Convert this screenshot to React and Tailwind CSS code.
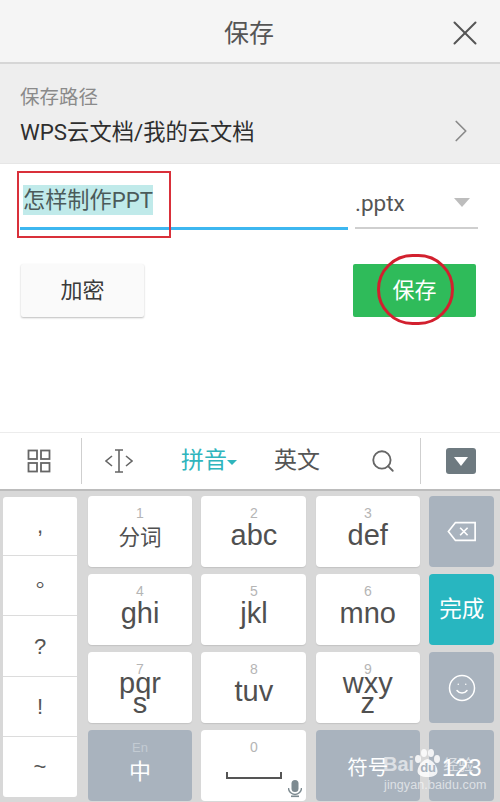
import { Search, Smile, X, ChevronRight } from 'lucide-react'

const cjk = "font-['Roboto','Noto_Sans_CJK_SC',sans-serif]"

function Key({ num, label, extra }) {
  return (
    <div className="h-[71px] bg-white rounded-[4px] shadow-[0_1px_1px_#c4c4c4] flex flex-col items-center pt-[10px]">
      <span className="text-[14px] leading-[14px] text-[#b5b5b5]">{num}</span>
      <span className={`text-[#505050] leading-[30px] ${extra ? 'text-[29px] -mt-[8px]' : 'text-[29px] mt-[0px]'}`}>{label}</span>
      {extra && <span className="text-[29px] leading-[20px] -mt-[5px] text-[#505050]">{extra}</span>}
    </div>
  )
}

function GrayKey({ className, children }) {
  return (
    <div className={`h-[71px] bg-[#a9b3be] rounded-[4px] flex flex-col items-center justify-center text-white ${className || ''}`}>
      {children}
    </div>
  )
}

export default function App() {
  return (
    <div className={`w-[500px] h-[802px] overflow-hidden relative bg-white ${cjk}`}>
      {/* header */}
      <div className="h-[64px] bg-[#f5f5f5] border-b-2 border-[#d6d6d6] flex items-center justify-center relative">
        <span className="text-[25px] text-[#555] mt-[6px] -ml-[2px]">保存</span>
        <X size={42} strokeWidth={1.15} className="absolute right-[14px] top-[12px] text-[#555]" />
      </div>

      {/* save path */}
      <div className="h-[100px] bg-[#eeeeee] pl-[20px] pr-[30px] pt-[19px] flex items-center justify-between border-b border-[#e6e6e6]">
        <div className="-mt-[13px]">
          <div className="text-[19.5px] leading-[26px] text-[#8a8a8a]">保存路径</div>
          <div className="text-[22.3px] leading-[34px] text-[#2e2e2e] mt-[4px]">WPS云文档/我的云文档</div>
        </div>
        <ChevronRight size={38} strokeWidth={1.1} className="text-[#8a8a8a] mt-[16px] mr-[-10px]" />
      </div>

      {/* file name */}
      <div className="flex pl-[20px] pr-[22px] pt-[21px]">
        <div className="w-[328px] h-[45px] border-b-[3px] border-[#3db7f0] pl-[3px]">
          <span className="inline-block h-[30px] bg-[#c0eaea] text-[22.2px] leading-[30px] text-[#4b5a5a]">怎样制作PPT</span>
        </div>
        <div className="ml-[7px] flex-1 h-[44px] border-b-2 border-[#cfcfcf] flex justify-between items-start pt-[3px] pr-[8px]">
          <span className="text-[22.5px] leading-[30px] text-[#555]">.pptx</span>
          <span className="w-0 h-0 mt-[10px] border-x-[8px] border-x-transparent border-t-[9px] border-t-[#bdbdbd]" />
        </div>
      </div>

      {/* buttons */}
      <div className="flex justify-between pl-[21px] pr-[24px] mt-[34px]">
        <div className="w-[123px] h-[53px] bg-[#fafafa] rounded-[2px] shadow-[0_1px_2px_#bdbdbd] flex items-center justify-center text-[22px] text-[#3a3a3a]">加密</div>
        <div className="w-[123px] h-[53px] bg-[#2fbb5a] rounded-[2px] flex items-center justify-center text-[22px] text-white">保存</div>
      </div>

      {/* keyboard */}
      <div className="absolute left-0 right-0 bottom-0">
        <div className="h-[59px] border-t border-[#ececec] border-b-2 border-b-[#bcbcbc] bg-white flex items-center">
          <div className="w-[82px] h-[46px] border-r border-[#cfcfcf] flex items-center justify-center">
            <svg width="24" height="24" viewBox="0 0 24 24" fill="none" stroke="#666" strokeWidth="1.8" className="-ml-[3px]">
              <rect x="1.5" y="1.5" width="8.5" height="8.5" />
              <rect x="14" y="1.5" width="8.5" height="8.5" />
              <rect x="1.5" y="14" width="8.5" height="8.5" />
              <rect x="14" y="14" width="8.5" height="8.5" />
            </svg>
          </div>
          <div className="w-[339px] h-[46px] border-r border-[#cfcfcf] flex items-center relative">
            <svg width="28" height="26" viewBox="0 0 28 26" fill="none" stroke="#666" strokeWidth="1.6" className="ml-[23px]">
              <path d="M7 8l-6 5 6 5M21 8l6 5-6 5M10 2h8M10 24h8M14 2v22" />
            </svg>
            <span className="ml-[48px] text-[23px] text-[#2fb5bd]">拼音</span>
            <span className="w-0 h-0 mt-[3px] border-x-[5px] border-x-transparent border-t-[5px] border-t-[#2fb5bd]" />
            <span className="ml-[37px] text-[23px] text-[#555]">英文</span>
            <Search size={26} strokeWidth={1.7} className="ml-[50px] text-[#666]" />
          </div>
          <div className="w-[30px] h-[26px] ml-[25px] bg-[#6e7a80] rounded-[3px] flex items-center justify-center">
            <span className="w-0 h-0 mt-[1px] border-x-[7px] border-x-transparent border-t-[9px] border-t-white" />
          </div>
        </div>

        <div className="h-[311px] bg-[#d8d8d8] flex pl-[3px] pt-[5px]">
          <div className="w-[74px] h-[300px] mt-[1px] bg-white rounded-[3px] flex flex-col divide-y divide-[#dcdcdc] text-[#555] text-[22px] font-['Liberation_Sans','Noto_Sans_CJK_TC',sans-serif]">
            {[',', '。', '?', '!', '~'].map((c, i) => (
              <div key={i} className="flex-1 flex items-center justify-center -translate-y-[1px]">{c}</div>
            ))}
          </div>
          <div className="ml-[11px] grid grid-cols-[104px_105px_104px_65px] gap-x-[9.4px] gap-y-[6.5px] font-['Liberation_Sans','Noto_Sans_CJK_SC',sans-serif]">
            <Key num="1" label={<span className="text-[21.5px]">分词</span>} />
            <Key num="2" label="abc" />
            <Key num="3" label="def" />
            <GrayKey>
              <svg width="30" height="21" viewBox="0 0 32 22" fill="none" stroke="#fff" strokeWidth="1.8">
                <path d="M9 1.5h21v19H9L1.5 11zM14 7l8 8M22 7l-8 8" />
              </svg>
            </GrayKey>

            <Key num="4" label="ghi" />
            <Key num="5" label="jkl" />
            <Key num="6" label="mno" />
            <GrayKey className="!bg-[#28b6c0] text-[22.5px] font-['Roboto','Noto_Sans_CJK_SC']">完成</GrayKey>

            <Key num="7" label="pqr" extra="s" />
            <Key num="8" label="tuv" />
            <Key num="9" label="wxy" extra="z" />
            <GrayKey><Smile size={30} strokeWidth={1.2} /></GrayKey>

            <GrayKey>
              <span className="text-[13px] leading-[14px] text-[#c3cbd3] -mt-[4px]">En</span>
              <span className="text-[22px] leading-[30px] mt-[2px]">中</span>
            </GrayKey>
            <div className="h-[71px] bg-white rounded-[4px] flex flex-col items-center pt-[10px] relative">
              <span className="text-[14px] leading-[14px] text-[#b5b5b5]">0</span>
              <svg width="56" height="8" viewBox="0 0 56 8" fill="none" stroke="#555" strokeWidth="2" className="mt-[18px]">
                <path d="M1 0v6h54V0" />
              </svg>
              <svg width="14" height="18" viewBox="0 0 14 18" className="absolute right-[4px] bottom-[3px]" fill="#7d8a90">
                <rect x="3.5" y="0" width="7" height="12" rx="3.5" />
                <path d="M0.5 8a6.5 6.5 0 0 0 13 0" fill="none" stroke="#7d8a90" strokeWidth="1.4" />
                <rect x="3" y="15.5" width="8" height="1.6" />
              </svg>
            </div>
            <GrayKey className="text-[20.5px] font-['Roboto','Noto_Sans_CJK_SC']"><span className="mt-[4px]">符号</span></GrayKey>
            <GrayKey className="text-[24px]"><span className="mt-[4px]">123</span></GrayKey>
          </div>
        </div>
      </div>

      {/* red annotations */}
      <div className="absolute left-[17px] top-[171px] w-[154px] h-[67px] border-2 border-[#d9303a]" />
      <div className="absolute left-[377px] top-[254px] w-[77px] h-[71px] rounded-full border-[3px] border-[#d2202e]" />

      {/* watermark */}
      <div className="absolute left-[384px] top-[749px] w-[116px] text-white font-['Liberation_Sans','Noto_Sans_CJK_SC',sans-serif]">
        <div className="flex items-end h-[28px]">
          <span className="text-[20px] leading-[26px] font-bold opacity-60 -ml-[1px]">Bai</span>
          <span className="relative block w-[27px] h-[28px]">
            <svg width="27" height="28" viewBox="0 0 27 28" fill="#fff" className="opacity-85">
              <ellipse cx="4" cy="10" rx="3" ry="4" />
              <ellipse cx="10" cy="4" rx="3" ry="4" />
              <ellipse cx="17" cy="4" rx="3" ry="4" />
              <ellipse cx="23" cy="10" rx="3" ry="4" />
              <path d="M13.5 10c-4 0-10 7-10 12 0 4 4 6 10 6s10-2 10-6c0-5-6-12-10-12z" />
            </svg>
            <span className="absolute left-[6px] top-[12px] text-[13px] leading-[14px] font-bold text-[#a9b3be]">du</span>
          </span>
          <span className="text-[15px] leading-[25px] ml-[2px] opacity-60">经验</span>
        </div>
        <div className="text-[12.5px] leading-[16px] tracking-[0.1px] opacity-60">jingyan.baidu.com</div>
      </div>
    </div>
  )
}
